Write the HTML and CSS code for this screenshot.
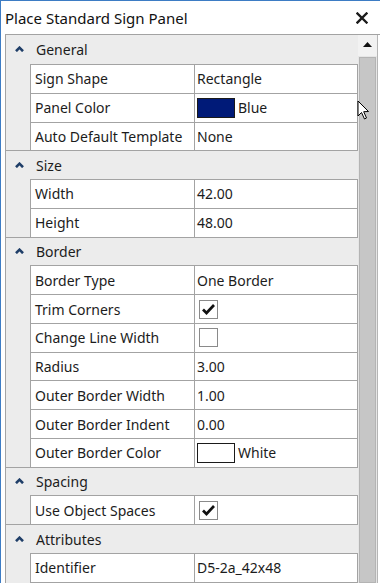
FILE: index.html
```html
<!DOCTYPE html>
<html>
<head>
<meta charset="utf-8">
<link rel="stylesheet" href="styles.css">
</head>
<body>
<div class="window">
  <div class="titlebar">
    <span class="title">Place Standard Sign Panel</span>
    <svg class="close" width="12" height="12" viewBox="0 0 12 12"><path d="M1.5 1.5 L10.5 10.5 M10.5 1.5 L1.5 10.5" stroke="#1a1a1a" stroke-width="2.4" stroke-linecap="square"/></svg>
  </div>
  <div class="gridwrap">
    <div class="props">
      <div class="head first"><span class="chev"><svg width="9" height="6" viewBox="0 0 9 6"><path d="M1 5.2 L4.5 1.7 L8 5.2" fill="none" stroke="#1f3e68" stroke-width="2.6"/></svg></span><span class="hlabel">General</span></div>
      <div class="row"><span class="gut"></span><span class="name">Sign Shape</span><span class="val">Rectangle</span></div>
      <div class="row"><span class="gut"></span><span class="name">Panel Color</span><span class="val"><span class="swatch blue"></span>Blue</span></div>
      <div class="row"><span class="gut"></span><span class="name">Auto Default Template</span><span class="val">None</span></div>

      <div class="head"><span class="chev"><svg width="9" height="6" viewBox="0 0 9 6"><path d="M1 5.2 L4.5 1.7 L8 5.2" fill="none" stroke="#1f3e68" stroke-width="2.6"/></svg></span><span class="hlabel">Size</span></div>
      <div class="row"><span class="gut"></span><span class="name">Width</span><span class="val">42.00</span></div>
      <div class="row"><span class="gut"></span><span class="name">Height</span><span class="val">48.00</span></div>

      <div class="head"><span class="chev"><svg width="9" height="6" viewBox="0 0 9 6"><path d="M1 5.2 L4.5 1.7 L8 5.2" fill="none" stroke="#1f3e68" stroke-width="2.6"/></svg></span><span class="hlabel">Border</span></div>
      <div class="row"><span class="gut"></span><span class="name">Border Type</span><span class="val">One Border</span></div>
      <div class="row"><span class="gut"></span><span class="name">Trim Corners</span><span class="val"><span class="check"><svg width="15" height="13" viewBox="0 0 15 13"><path d="M2 6.5 L5.5 10 L13 2" fill="none" stroke="#111" stroke-width="2.7"/></svg></span></span></div>
      <div class="row"><span class="gut"></span><span class="name">Change Line Width</span><span class="val"><span class="check"></span></span></div>
      <div class="row"><span class="gut"></span><span class="name">Radius</span><span class="val">3.00</span></div>
      <div class="row"><span class="gut"></span><span class="name">Outer Border Width</span><span class="val">1.00</span></div>
      <div class="row"><span class="gut"></span><span class="name">Outer Border Indent</span><span class="val">0.00</span></div>
      <div class="row"><span class="gut"></span><span class="name">Outer Border Color</span><span class="val"><span class="swatch white"></span>White</span></div>

      <div class="head"><span class="chev"><svg width="9" height="6" viewBox="0 0 9 6"><path d="M1 5.2 L4.5 1.7 L8 5.2" fill="none" stroke="#1f3e68" stroke-width="2.6"/></svg></span><span class="hlabel">Spacing</span></div>
      <div class="row"><span class="gut"></span><span class="name">Use Object Spaces</span><span class="val"><span class="check"><svg width="15" height="13" viewBox="0 0 15 13"><path d="M2 6.5 L5.5 10 L13 2" fill="none" stroke="#111" stroke-width="2.7"/></svg></span></span></div>

      <div class="head"><span class="chev"><svg width="9" height="6" viewBox="0 0 9 6"><path d="M1 5.2 L4.5 1.7 L8 5.2" fill="none" stroke="#1f3e68" stroke-width="2.6"/></svg></span><span class="hlabel">Attributes</span></div>
      <div class="row"><span class="gut"></span><span class="name">Identifier</span><span class="val">D5-2a_42x48</span></div>
      <div class="row"><span class="gut"></span><span class="name"></span><span class="val"></span></div>
    </div>
    <div class="scrollbar">
      <div class="sbtn"><svg width="9" height="5" viewBox="0 0 9 5"><path d="M0 5 L4.5 0 L9 5 Z" fill="#111"/></svg></div>
      <div class="thumb"></div>
    </div>
  </div>
  <svg class="cursor" width="14" height="21" viewBox="0 0 14 21"><path d="M1 1 L1 16 L4.5 12.5 L7.5 19 L9.5 18 L6.7 11.7 L11.5 11.5 Z" fill="#fff" stroke="#000" stroke-width="1" stroke-linejoin="round"/></svg>
</div>
</body>
</html>
```

FILE: styles.css
```css
* { box-sizing: border-box; }
html, body { margin: 0; padding: 0; }
body {
  width: 380px;
  height: 583px;
  overflow: hidden;
  background: #fff;
  font-family: "Noto Sans", "Open Sans", sans-serif;
  font-size: 14px;
  color: #1c1c1c;
}
.window {
  position: relative;
  width: 380px;
  height: 583px;
  border-left: 1px solid #3d7cc4;
  border-top: 1px solid #3d7cc4;
  overflow: hidden;
  display: flex;
  flex-direction: column;
}
.titlebar {
  height: 33px;
  flex: none;
  display: flex;
  align-items: center;
  justify-content: space-between;
  padding: 0 12px 0 4px;
}
.title { font-size: 15px; color: #111; }
.close { display: block; }
.gridwrap {
  flex: 1;
  display: flex;
  margin-left: 4px;
  border-left: 1px solid #a3a3a3;
  border-top: 1px solid #a3a3a3;
  min-height: 0;
}
.props { flex: none; width: 352px; }
.head {
  height: 28.78px;
  border-top: 1px solid #a3a3a3;
  background: #ececec;
  display: flex;
  align-items: center;
}
.head.first { height: 29px; border-top: none; }
.chev { width: 24px; display: flex; justify-content: center; padding-left: 2px; padding-bottom: 1px; }
.chev svg { display: block; }
.hlabel { padding-left: 6px; }
.row {
  height: 28.78px;
  display: grid;
  grid-template-columns: 24px 164px 1fr;
}
.gut { background: #ececec; }
.name, .val {
  border-top: 1px solid #a3a3a3;
  border-left: 1px solid #a3a3a3;
  background: #fff;
  display: flex;
  align-items: center;
  white-space: nowrap;
  overflow: hidden;
}
.val { border-right: 1px solid #a3a3a3; }
.name { padding-left: 4px; }
.val { padding-left: 2px; }
.swatch {
  width: 38px;
  height: 20px;
  border: 1.5px solid #1a1a1a;
  margin-right: 3px;
  flex: none;
}
.swatch.blue { background: #001a78; }
.swatch.white { background: #fff; }
.check {
  width: 19px;
  height: 19px;
  border: 1px solid #8a8a8a;
  background: #fff;
  margin-left: 2px;
  display: flex;
  align-items: center;
  justify-content: center;
}
.check svg { display: block; }
.scrollbar {
  width: 20px;
  flex: none;
  background: #e6e6e6;
  display: flex;
  flex-direction: column;
  border-right: 1px solid #b5b5b5;
}
.sbtn {
  height: 21px;
  background: #f2f2f2;
  display: flex;
  align-items: center;
  justify-content: center;
  padding-bottom: 2px;
}
.thumb {
  flex: 1;
  margin: 1px 1px 0 1px;
  background: #c6c6c6;
  border: 1px solid #b4b4b4;
}
.cursor { position: absolute; left: 356px; top: 99px; }
```
